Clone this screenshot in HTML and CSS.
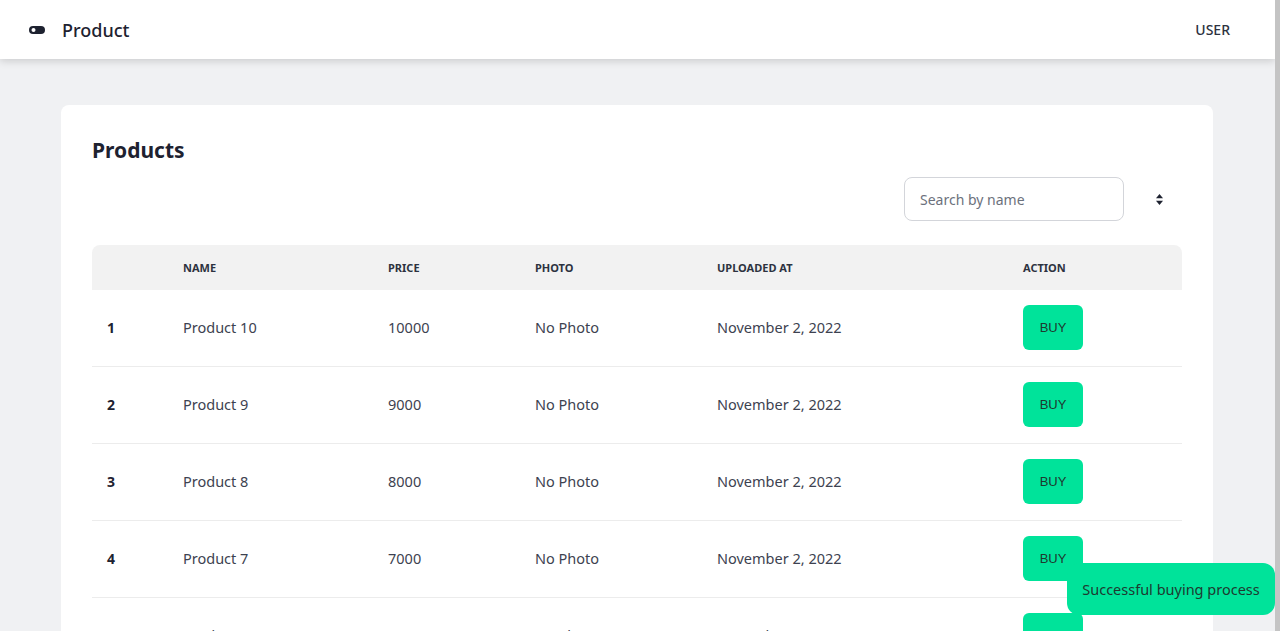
FILE: index.html
```html
<!DOCTYPE html>
<html>
<head>
<meta charset="utf-8">
<link rel="stylesheet" href="styles.css">
</head>
<body>
<header class="topbar">
  <div class="brand">
    <svg class="brand-icon" width="16" height="8" viewBox="0 0 16 8"><rect x="0" y="0" width="16" height="8" rx="4" fill="#1e2230"/><circle cx="4.5" cy="4" r="2" fill="#fff"/></svg>
    <span class="brand-name">Product</span>
  </div>
  <div class="user">USER</div>
</header>
<main class="main">
  <section class="card">
    <h1 class="title">Products</h1>
    <div class="toolbar">
      <input class="search" type="text" placeholder="Search by name">
      <span class="sort"><svg width="7" height="11" viewBox="0 0 7 11"><path d="M3.5 0 L7 4.3 H0 Z" fill="#1e2230"/><path d="M3.5 11 L7 6.7 H0 Z" fill="#1e2230"/></svg></span>
    </div>
    <table class="grid">
      <colgroup>
        <col class="c1"><col class="c2"><col class="c3"><col class="c4"><col class="c5"><col class="c6">
      </colgroup>
      <thead>
        <tr><th></th><th>Name</th><th>Price</th><th>Photo</th><th>Uploaded at</th><th>Action</th></tr>
      </thead>
      <tbody>
        <tr><td class="num">1</td><td>Product 10</td><td>10000</td><td>No Photo</td><td>November 2, 2022</td><td><button class="buy">BUY</button></td></tr>
        <tr><td class="num">2</td><td>Product 9</td><td>9000</td><td>No Photo</td><td>November 2, 2022</td><td><button class="buy">BUY</button></td></tr>
        <tr><td class="num">3</td><td>Product 8</td><td>8000</td><td>No Photo</td><td>November 2, 2022</td><td><button class="buy">BUY</button></td></tr>
        <tr><td class="num">4</td><td>Product 7</td><td>7000</td><td>No Photo</td><td>November 2, 2022</td><td><button class="buy">BUY</button></td></tr>
        <tr><td class="num">5</td><td>Product 6</td><td>6000</td><td>No Photo</td><td>November 2, 2022</td><td><button class="buy">BUY</button></td></tr>
      </tbody>
    </table>
  </section>
</main>
<div class="toast">Successful buying process</div>
</body>
</html>
```
FILE: styles.css
```css
html {
  background: #c4c4c4;
  height: 100%;
}
body {
  margin: 0 5px 0 0;
  min-height: 100%;
  background: #f0f1f3;
  font-family: "Noto Sans", "Open Sans", sans-serif;
  color: #2d3240;
}
.topbar {
  height: 59px;
  background: #fff;
  box-shadow: 0 2px 8px rgba(0,0,0,0.16);
  display: flex;
  align-items: center;
  justify-content: space-between;
  padding: 0 45px 0 29px;
  position: relative;
  z-index: 2;
}
.brand { display: flex; align-items: center; gap: 17px; }
.brand-icon { display: block; }
.brand-name { font-size: 18px; color: #1e2230; font-weight: 500; }
.user { font-size: 14px; font-weight: 500; color: #2d3240; }
.main { padding: 46px 62px 0 61px; }
.card {
  background: #fff;
  border-radius: 8px;
  padding: 28px 31px 0;
}
.title {
  margin: 0;
  font-size: 21px;
  font-weight: 700;
  color: #1e2230;
  line-height: 34px;
}
.toolbar {
  display: flex;
  justify-content: flex-end;
  align-items: center;
  margin-top: 10px;
  padding-right: 19px;
  gap: 32px;
}
.search {
  width: 220px;
  height: 44px;
  box-sizing: border-box;
  border: 1px solid #d3d5da;
  border-radius: 8px;
  padding: 0 15px;
  font-family: inherit;
  font-size: 14px;
  color: #2d3240;
  outline: none;
}
.search::placeholder { color: #6c717c; }
.sort { display: flex; }
.sort svg { display: block; }
.grid {
  margin-top: 24px;
  width: 100%;
  border-collapse: collapse;
  table-layout: fixed;
}
.c1 { width: 76px; }
.c2 { width: 205px; }
.c3 { width: 147px; }
.c4 { width: 182px; }
.c5 { width: 306px; }
.c6 { width: 174px; }
.grid thead tr { background: #f2f2f2; }
.grid th {
  height: 45px;
  padding: 0 15px;
  text-align: left;
  font-size: 11px;
  font-weight: 700;
  text-transform: uppercase;
  color: #2d3240;
}
.grid th:first-child { border-top-left-radius: 8px; }
.grid th:last-child { border-top-right-radius: 8px; }
.grid td {
  height: 74px;
  padding: 0 15px 2px;
  font-size: 14.5px;
  color: #3d4250;
  border-bottom: 1px solid #ececec;
}
.grid td.num { font-weight: 700; color: #1e2230; font-size: 14px; }
.buy {
  width: 60px;
  height: 45px;
  border: 0;
  border-radius: 6px;
  background: #00e39a;
  color: #1e3a30;
  font-family: "Liberation Sans", Arial, sans-serif;
  font-size: 13px;
  padding: 0;
}
.toast {
  position: fixed;
  right: 5px;
  bottom: 16px;
  width: 208px;
  height: 52px;
  box-sizing: border-box;
  background: #00e39a;
  border-radius: 12px;
  display: flex;
  align-items: center;
  justify-content: center;
  font-size: 14.5px;
  color: #1e3a30;
  z-index: 5;
}
```
